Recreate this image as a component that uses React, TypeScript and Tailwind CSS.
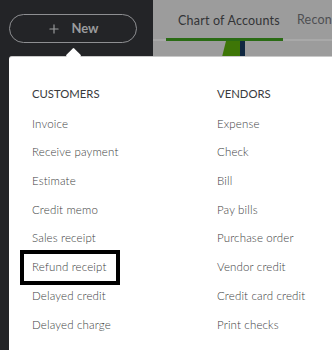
import { Plus } from "lucide-react";

const CUSTOMERS = [
  "Invoice",
  "Receive payment",
  "Estimate",
  "Credit memo",
  "Sales receipt",
  "Refund receipt",
  "Delayed credit",
  "Delayed charge",
];

const VENDORS = [
  "Expense",
  "Check",
  "Bill",
  "Pay bills",
  "Purchase order",
  "Vendor credit",
  "Credit card credit",
  "Print checks",
];

function MenuColumn({ title, items }: { title: string; items: string[] }) {
  return (
    <div className="flex flex-col">
      <div className="h-[29px] flex items-center text-[11.3px] text-[#393a3d]">
        {title}
      </div>
      {items.map((item) => (
        <div
          key={item}
          className="relative h-[28.7px] flex items-center text-[11.5px] font-light text-[#3d3e41] tracking-[0.15px]"
        >
          {item}
          {item === "Refund receipt" && (
            <span className="absolute left-[-12px] top-[-2px] w-[100px] h-[35px] border-[4px] border-black" />
          )}
        </div>
      ))}
    </div>
  );
}

export default function App() {
  return (
    <div
      className="relative w-[332px] h-[350px] overflow-hidden flex bg-[#232427]"
      style={{ fontFamily: "Lato, 'Open Sans', sans-serif" }}
    >
      {/* sidebar */}
      <div className="w-[153px] shrink-0 pt-[14px] pl-[9px]">
        <button className="w-[128px] h-[29px] rounded-full border border-[#8e8f92] flex items-center justify-center gap-[10px] text-[#9a9b9d] text-[13px] font-bold">
          <Plus size={14} strokeWidth={2} />
          <span>New</span>
        </button>
      </div>

      {/* dimmed page */}
      <div className="flex-1 bg-[#9c9c9c] relative">
        <div className="flex items-end h-[41px] border-b-[2px] border-[#a9a9a9]">
          <div className="ml-[13px] w-[117px] h-full flex flex-col justify-end">
            <div className="pl-[12px] pb-[7px] text-[12.5px] text-[#333437] tracking-[0.2px]">
              Chart of Accounts
            </div>
            <div className="h-[3px] bg-[#2a6b14] -mb-[2px]" />
          </div>
          <div className="ml-[14px] pb-[9px] text-[12.5px] text-[#4e4f52] tracking-[0.2px] whitespace-nowrap">
            Reconcile
          </div>
        </div>
        <svg width="26" height="16" className="block ml-[68px]" viewBox="0 0 26 16">
          <polygon points="5,0 19,0 19,16 1,16" fill="#3e7607" />
          <polygon points="19,0 24,0 24,16 19,16" fill="#0f2740" />
        </svg>
      </div>

      {/* popup menu */}
      <div className="absolute left-[9px] top-[56px] right-0 bottom-0 bg-white rounded-tl-[3px] border-t border-[#c9c9c9]">
        <span className="absolute left-[59px] top-[-7px] w-[11px] h-[11px] bg-white rotate-45 rounded-[1px]" />
        <div className="relative grid grid-cols-[185px_1fr] pl-[23px] pt-[23px]">
          <MenuColumn title="CUSTOMERS" items={CUSTOMERS} />
          <MenuColumn title="VENDORS" items={VENDORS} />
        </div>
      </div>
    </div>
  );
}
